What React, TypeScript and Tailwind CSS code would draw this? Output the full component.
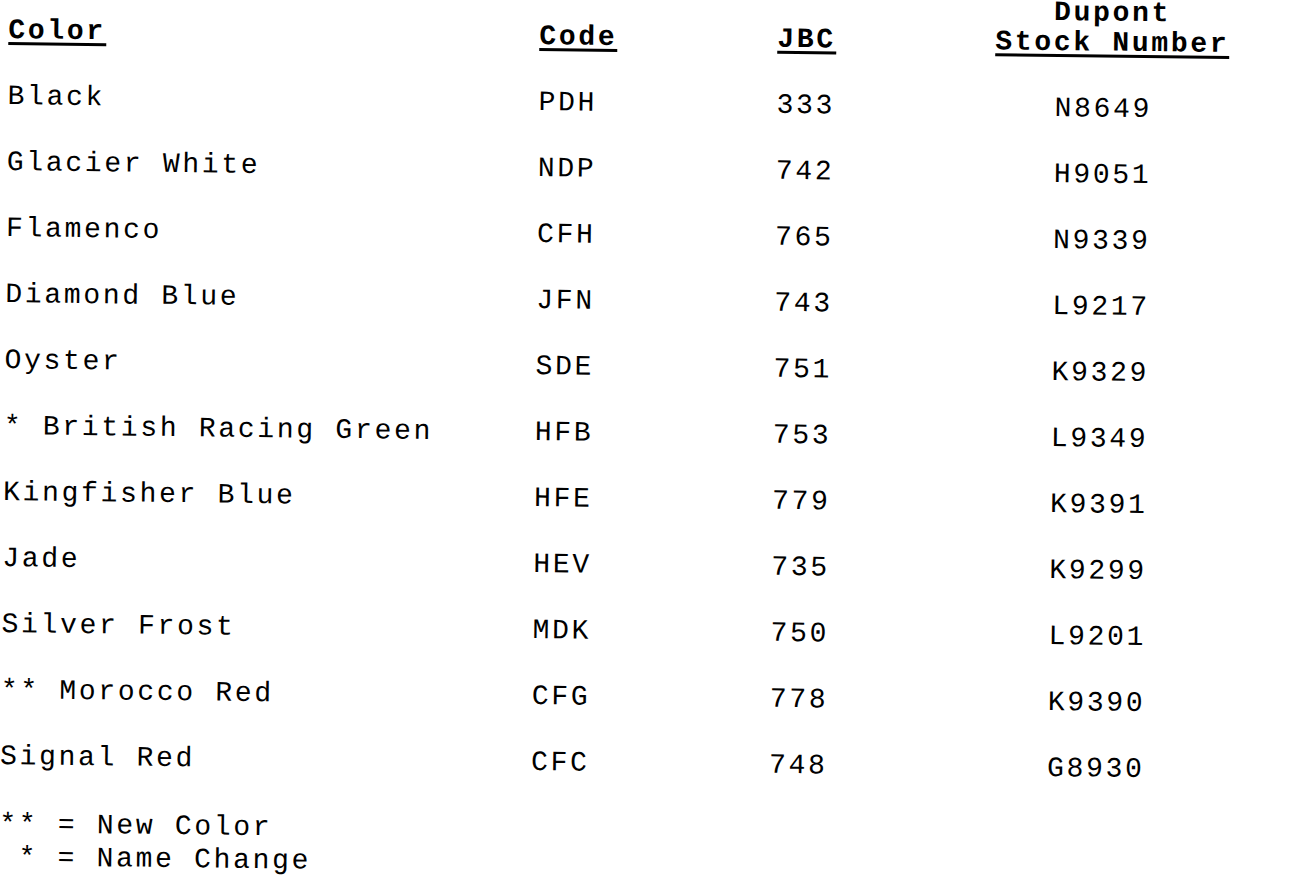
const rows = [
  { color: 'Black', code: 'PDH', jbc: '333', stock: 'N8649' },
  { color: 'Glacier White', code: 'NDP', jbc: '742', stock: 'H9051' },
  { color: 'Flamenco', code: 'CFH', jbc: '765', stock: 'N9339' },
  { color: 'Diamond Blue', code: 'JFN', jbc: '743', stock: 'L9217' },
  { color: 'Oyster', code: 'SDE', jbc: '751', stock: 'K9329' },
  { color: '* British Racing Green', code: 'HFB', jbc: '753', stock: 'L9349' },
  { color: 'Kingfisher Blue', code: 'HFE', jbc: '779', stock: 'K9391' },
  { color: 'Jade', code: 'HEV', jbc: '735', stock: 'K9299' },
  { color: 'Silver Frost', code: 'MDK', jbc: '750', stock: 'L9201' },
  { color: '** Morocco Red', code: 'CFG', jbc: '778', stock: 'K9390' },
  { color: 'Signal Red', code: 'CFC', jbc: '748', stock: 'G8930' },
]

const cols = 'grid grid-cols-[531px_238px_218px_1fr]'

function Heading({ children }: { children: string }) {
  return (
    <div className="leading-[30px] font-bold">
      <span className="inline-block leading-[22px] border-b-[3px] border-black">{children}</span>
    </div>
  )
}

export default function App() {
  return (
    <div className="w-full h-screen overflow-hidden bg-white text-black">
      <div
        className="
          -mt-[20px] pt-[5.5px] pl-[9px] origin-top-left rotate-[0.65deg]
          font-['Liberation_Mono','Courier_New',monospace] text-[28px] tracking-[2.7px] whitespace-pre
        "
      >
        {/* Header */}
        <div className={`${cols} items-end`}>
          <Heading>Color</Heading>
          <Heading>Code</Heading>
          <Heading>JBC</Heading>
          <div className="w-fit flex flex-col items-center">
            <div className="leading-[30px] font-bold">Dupont</div>
            <Heading>Stock Number</Heading>
          </div>
        </div>

        {/* Rows */}
        <div className="mt-[18px] flex flex-col">
          {rows.map((r) => (
            <div key={r.code} className={`${cols} leading-[66px]`}>
              <div>{r.color}</div>
              <div>{r.code}</div>
              <div>{r.jbc}</div>
              <div className="pl-[60px]">{r.stock}</div>
            </div>
          ))}
        </div>

        {/* Legend */}
        <div className="mt-[18px] leading-[33px]">
          <div>{'** = New Color'}</div>
          <div>{' * = Name Change'}</div>
        </div>
      </div>
    </div>
  )
}
